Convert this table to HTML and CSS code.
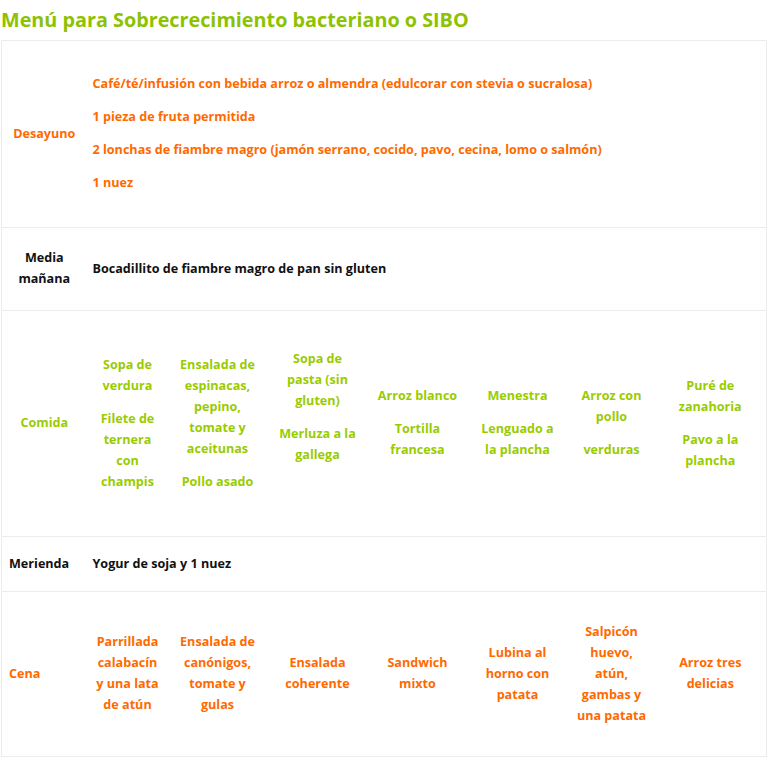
FILE: index.html
```html
<!DOCTYPE html>
<html lang="es">
<head>
<meta charset="utf-8">
<title>Menú para Sobrecrecimiento bacteriano o SIBO</title>
<link rel="stylesheet" href="styles.css">
</head>
<body>
<div class="page">
  <h2 class="title">Menú para Sobrecrecimiento bacteriano o SIBO</h2>
  <table class="menu">
    <colgroup>
      <col class="col-label">
      <col class="col-1">
      <col class="col-2">
      <col class="col-3">
      <col class="col-4">
      <col class="col-5">
      <col class="col-6">
      <col class="col-7">
    </colgroup>
    <tr class="row-desayuno orange">
      <td class="label center">Desayuno</td>
      <td colspan="7" class="wide">
        <p>Café/té/infusión con bebida arroz o almendra (edulcorar con stevia o sucralosa)</p>
        <p>1 pieza de fruta permitida</p>
        <p>2 lonchas de fiambre magro (jamón serrano, cocido, pavo, cecina, lomo o salmón)</p>
        <p>1 nuez</p>
      </td>
    </tr>
    <tr class="row-media dark">
      <td class="label center">Media mañana</td>
      <td colspan="7" class="wide">Bocadillito de fiambre magro de pan sin gluten</td>
    </tr>
    <tr class="row-comida green">
      <td class="label center">Comida</td>
      <td class="dish"><p>Sopa de<br>verdura</p><p>Filete de<br>ternera<br>con<br>champis</p></td>
      <td class="dish"><p>Ensalada de<br>espinacas,<br>pepino,<br>tomate y<br>aceitunas</p><p>Pollo asado</p></td>
      <td class="dish"><p>Sopa de<br>pasta (sin<br>gluten)</p><p>Merluza a la<br>gallega</p><p>&nbsp;</p></td>
      <td class="dish"><p>Arroz blanco</p><p>Tortilla<br>francesa</p></td>
      <td class="dish"><p>Menestra</p><p>Lenguado a<br>la plancha</p></td>
      <td class="dish"><p>Arroz con<br>pollo</p><p>verduras</p></td>
      <td class="dish"><p>Puré de<br>zanahoria</p><p>Pavo a la<br>plancha</p></td>
    </tr>
    <tr class="row-merienda dark">
      <td class="label">Merienda</td>
      <td colspan="7" class="wide">Yogur de soja y 1 nuez</td>
    </tr>
    <tr class="row-cena orange">
      <td class="label">Cena</td>
      <td class="dish">Parrillada<br>calabacín<br>y una lata<br>de atún</td>
      <td class="dish">Ensalada de<br>canónigos,<br>tomate y<br>gulas</td>
      <td class="dish">Ensalada<br>coherente</td>
      <td class="dish">Sandwich<br>mixto</td>
      <td class="dish">Lubina al<br>horno con<br>patata</td>
      <td class="dish">Salpicón<br>huevo,<br>atún,<br>gambas y<br>una patata</td>
      <td class="dish">Arroz tres<br>delicias</td>
    </tr>
  </table>
</div>
</body>
</html>
```

FILE: styles.css
```css
* { box-sizing: border-box; }

html, body {
  margin: 0;
  padding: 0;
  background: #ffffff;
}

body {
  font-family: "Open Sans", "DejaVu Sans", sans-serif;
  font-weight: 700;
  font-size: 12.6px;
  line-height: 21px;
}

.page {
  padding: 0 1px;
  width: 767px;
}

.title {
  margin: 0;
  font-size: 19.8px;
  line-height: 40px;
  font-weight: 700;
  color: #8dc200;
  white-space: nowrap;
}

.menu {
  width: 765px;
  border-collapse: collapse;
  table-layout: fixed;
  border: 1px solid #ececec;
}

.col-label { width: 85px; }
.col-1 { width: 82px; }
.col-2 { width: 98px; }
.col-3 { width: 102px; }
.col-4 { width: 98px; }
.col-5 { width: 102px; }
.col-6 { width: 86px; }
.col-7 { width: 112px; }

.menu td {
  border-top: 1px solid #ececec;
  border-bottom: 1px solid #ececec;
  padding: 0 6px 2px;
  vertical-align: middle;
}

.menu p {
  margin: 0;
}

.menu p + p {
  margin-top: 12px;
}

.menu .label {
  text-align: left;
  padding-left: 7px;
}

.menu .label.center {
  text-align: center;
  padding-left: 6px;
}

.wide {
  text-align: left;
}

.dish {
  text-align: center;
}

.orange { color: #ff6a00; }
.green { color: #99cc00; }
.dark { color: #111111; }

.row-desayuno td { height: 187px; }
.row-media td { height: 83px; }
.row-comida td { height: 226px; }
.row-merienda td { height: 55px; }
.row-cena td { height: 165px; }
```
